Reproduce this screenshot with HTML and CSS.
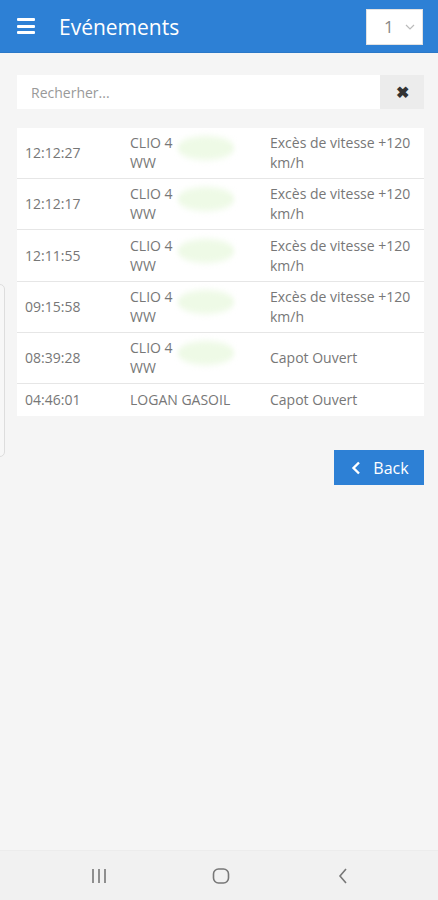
FILE: index.html
```html
<!DOCTYPE html>
<html lang="fr">
<head>
	<meta charset="UTF-8">
	<title>Evénements</title>
	<link rel="stylesheet" href="styles.css">
</head>
<body>
	<div class="app">
		<div class="topbar">
			<span class="burger"><i></i><i></i><i></i></span>
			<h1 class="title">Evénements</h1>
			<div class="pick">
				<span>1</span>
				<svg width="10" height="6" viewBox="0 0 10 6"><path d="M1 1l4 4 4-4" fill="none" stroke="#bbb" stroke-width="1.2"/></svg>
			</div>
		</div>

		<div class="main">
			<div class="drawer-edge"></div>

			<div class="search">
				<input type="text" placeholder="Recherher...">
				<button class="clear">&#10006;</button>
			</div>

			<table class="events">
				<tr>
					<td class="t">12:12:27</td>
					<td class="v">CLIO 4 <span class="blur"></span><br>WW</td>
					<td class="e">Excès de vitesse +120 km/h</td>
				</tr>
				<tr>
					<td class="t">12:12:17</td>
					<td class="v">CLIO 4 <span class="blur"></span><br>WW</td>
					<td class="e">Excès de vitesse +120 km/h</td>
				</tr>
				<tr>
					<td class="t">12:11:55</td>
					<td class="v">CLIO 4 <span class="blur"></span><br>WW</td>
					<td class="e">Excès de vitesse +120 km/h</td>
				</tr>
				<tr>
					<td class="t">09:15:58</td>
					<td class="v">CLIO 4 <span class="blur"></span><br>WW</td>
					<td class="e">Excès de vitesse +120 km/h</td>
				</tr>
				<tr>
					<td class="t">08:39:28</td>
					<td class="v">CLIO 4 <span class="blur"></span><br>WW</td>
					<td class="e">Capot Ouvert</td>
				</tr>
				<tr class="last">
					<td class="t">04:46:01</td>
					<td class="v">LOGAN GASOIL</td>
					<td class="e">Capot Ouvert</td>
				</tr>
			</table>

			<div class="actions">
				<button class="back">
					<svg width="10" height="14" viewBox="0 0 10 14"><path d="M8 1.5L2.5 7 8 12.5" fill="none" stroke="#fff" stroke-width="2.4"/></svg>
					Back
				</button>
			</div>
		</div>

		<div class="navbar">
			<svg width="20" height="18" viewBox="0 0 20 18"><path d="M4 2v14M10 2v14M16 2v14" stroke="#777" stroke-width="1.6"/></svg>
			<svg width="20" height="18" viewBox="0 0 20 18"><rect x="2.5" y="2" width="15" height="14" rx="5" fill="none" stroke="#777" stroke-width="1.6"/></svg>
			<svg width="20" height="18" viewBox="0 0 20 18"><path d="M13 2l-6 7 6 7" fill="none" stroke="#777" stroke-width="1.6"/></svg>
		</div>
	</div>
</body>
</html>
```

FILE: styles.css
```css
*{margin: 0;padding: 0;box-sizing: border-box;}
body{background: #f5f5f5;font-family: "Open Sans", "Liberation Sans", sans-serif;}
.app{height: 900px;display: flex;flex-direction: column;}

.topbar{
	height: 53px;background: #2d80d5;
	display: flex;align-items: center;
	padding: 0 15px 0 17px;
	border-bottom: 1px solid #2a78c8;
}
.burger{width: 18px;height: 16px;display: flex;flex-direction: column;justify-content: space-between;}
.burger i{display: block;height: 3px;background: #fff;border-radius: 1px;}
.title{
	margin-left: 24px;flex: 1;margin-top: 1px;
	color: #fff;font-size: 21px;font-weight: normal;
}
.pick{
	width: 57px;height: 36px;margin-top: 1px;
	background: #fff;border: 1px solid #e2e2e2;
	display: flex;align-items: center;justify-content: space-between;
	padding: 0 7px 0 17px;
	color: #888;font-size: 17px;
}

.main{flex: 1;position: relative;padding: 22px 14px 0 17px;}
.drawer-edge{
	position: absolute;left: -12px;top: 231px;
	width: 17px;height: 173px;
	border: 1px solid #ddd;border-radius: 5px;background: #f7f7f7;
}

.search{display: flex;height: 34px;}
.search input{
	flex: 1;border: 0;background: #fff;outline: none;
	padding: 0 14px;
	font-family: inherit;font-size: 14px;color: #555;
}
.search input::placeholder{color: #999;}
.clear{
	width: 44px;border: 0;background: #ececec;
	font-size: 16px;color: #333;font-weight: bold;
}

.events{
	width: 100%;margin-top: 19px;
	border-collapse: collapse;background: #fff;
	font-size: 14px;color: #777;line-height: 20px;
}
.events td{padding: 5px 8px;border-top: 1px solid #e6e6e6;vertical-align: middle;}
.events tr:first-child td{border-top: 0;}
.events tr:nth-child(3) td{padding-top: 6px;}
.events .last td{padding-bottom: 6px;padding-top: 6px;}
.events .t{width: 108px;}
.events .v{width: 140px;padding-left: 5px;}
.events .e{padding-left: 5px;padding-right: 6px;}
.blur{
	display: inline-block;width: 52px;height: 14px;vertical-align: -3px;margin-left: 2px;
	background: #eefae6;border-radius: 50%;filter: blur(2px);
	transform: translate(2px, 4px) scale(1.1, 1.7);
}

.actions{display: flex;justify-content: flex-end;margin-top: 34px;}
.back{
	width: 90px;height: 35px;border: 0;
	background: #2d80d5;color: #fff;
	font-family: inherit;font-size: 16px;
	display: flex;align-items: center;justify-content: center;gap: 12px;
	padding-left: 2px;
}

.navbar{
	height: 50px;background: #f1f1f1;border-top: 1px solid #ececec;
	display: flex;align-items: center;justify-content: space-between;
	padding: 0 85px 0 89px;
}
```
